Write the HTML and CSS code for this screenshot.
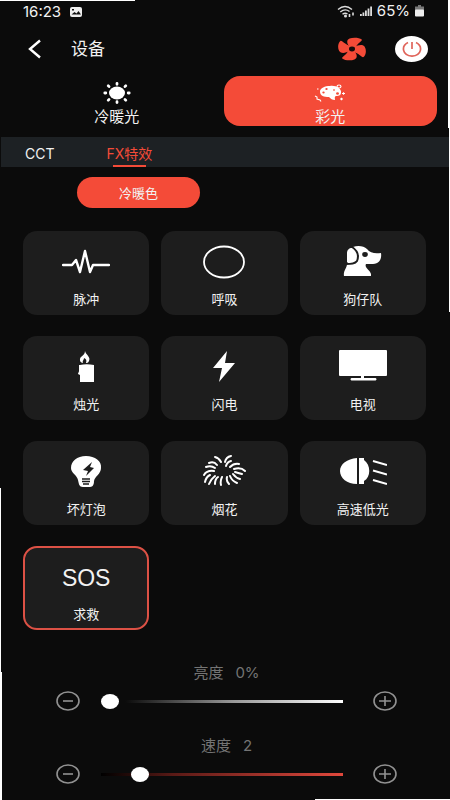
FILE: index.html
```html
<!DOCTYPE html>
<html lang="zh-CN">
<head>
<meta charset="utf-8">
<meta name="viewport" content="width=device-width, initial-scale=1">
<title>设备</title>
<link rel="stylesheet" href="styles.css">
</head>
<body>
<div class="status">
  <span class="status-group">16:23
    <svg width="14" height="12" viewBox="0 0 14 12"><rect x="1" y="1" width="12" height="10" rx="2" fill="#eee"/><path d="M2.500 8.500 5.500 6l2 1.500L9.500 5 12 8.500z" fill="#111"/><path d="M3 3h2v1.500H3z" fill="#111"/></svg>
  </span>
  <span class="status-group status-right">
    <svg width="18" height="13" viewBox="0 0 18 13" fill="none" stroke="#ddd" stroke-width="1.400"><path d="M1 4.500Q8 -1.500 15 4.500M3.300 7Q8 3 12.500 6.500M5.500 9.300Q8 7.300 10.500 9"/><circle cx="8.500" cy="11" r=".8" fill="#ddd"/><path d="M12.500 9v3M16 7.500v3" stroke-width="1.600"/></svg>
    <svg width="12" height="12" viewBox="0 0 12 12" fill="#ddd"><path d="M0 9h1.800v2H0zM2.500 7.500h1.800V11H2.500zM5 5.500h1.800V11H5zM7.600 3.500h1.800V11H7.600zM10.200 1.500H12V11h-1.800z"/></svg>
    65%
    <svg width="9" height="12" viewBox="0 0 9 12"><path d="M3 0h3v1.500h3V11H0V1.500h3z" fill="#777"/><rect y="4.500" width="9" height="7" rx="1" fill="#eee"/></svg>
  </span>
</div>

<header class="header">
  <button class="icon-button" aria-label="返回">
    <svg width="14" height="20" viewBox="0 0 14 20" fill="none" stroke="#fff" stroke-width="2.400"><path d="M12 1.500 2 10l10 8.500"/></svg>
  </button>
  <h1 class="title">设备</h1>
  <button class="icon-button fan" aria-label="风扇">
    <svg width="28" height="24" viewBox="-14 -12 28 24" fill="#f44b38">
      <defs><path id="blade" d="M-2-2C-4-5-5-9-2-10.500C1-12 6-11.500 8-9.500C9-8 4-6 3-1z"/></defs>
      <g transform="scale(1.220 1)"><use href="#blade"/><use href="#blade" transform="rotate(90)"/><use href="#blade" transform="rotate(180)"/><use href="#blade" transform="rotate(270)"/></g>
      <ellipse rx="3" ry="2.400" fill="#170d0c"/>
    </svg>
  </button>
  <button class="power" aria-label="电源">
    <svg width="20" height="18" viewBox="0 0 20 18" fill="none" stroke="#e0645a" stroke-width="1.700"><path d="M6 2.500C-1 6 0 15.500 10 16.200C20 15.500 21 6 14 2.500M10 2v7"/></svg>
  </button>
</header>

<nav class="modes">
  <button class="mode">
    <svg width="28" height="24" viewBox="0 0 28 24" fill="#fff"><ellipse cx="14" cy="12" rx="8" ry="6.500"/><path d="M14 2.500v.8M14 20.700v.8M1.800 12h1M25.200 12h1M5.200 4.800l.8.700M22 18.500l.8.700M22.800 4.800l-.8.700M6 18.500l-.8.700" stroke="#fff" stroke-width="2.800" stroke-linecap="round"/></svg>
    <span>冷暖光</span>
  </button>
  <button class="mode mode-active">
    <svg width="32" height="24" viewBox="0 0 32 24"><path d="M16 5C22 4 28 8 27 12c0 2-2 3-4 3-3 0-2 2-2 4-3 0-4-1-6-3-5 0-9-1-9-5.500C6 7 11 5 16 5z" fill="#fff"/><g fill="#f44b38"><ellipse cx="9.500" cy="11.500" rx="1.200" ry="1"/><ellipse cx="12.500" cy="8" rx="1.200" ry="1"/><ellipse cx="20" cy="9" rx="1" ry=".8"/><ellipse cx="23.500" cy="12.500" rx="1.400" ry="1.200"/></g><g stroke="#fff" stroke-width="1.100" fill="none"><ellipse cx="25" cy="5.500" rx="2" ry="1.500"/><path d="m1 15 2 1v2l3 1 1 1.500M28 12.500h3M29.500 11.200v2.600M26 18h3M27.500 16.700v2.600M3 8h1.500"/></g></svg>
    <span>彩光</span>
  </button>
</nav>

<nav class="tabs">
  <a class="tab" href="#cct">CCT</a>
  <a class="tab tab-active" href="#fx">FX特效</a>
</nav>

<main class="content">
  <button class="pill">冷暖色</button>

  <section class="effects">
    <button class="effect">
      <svg width="48" height="36" viewBox="0 0 48 36" fill="none" stroke="#fff" stroke-width="2.400" stroke-linecap="round" stroke-linejoin="round"><path d="M1 20h9l4-5 4 12 5-21 5 21 3-7h16"/></svg>
      <span>脉冲</span>
    </button>
    <button class="effect">
      <svg width="48" height="36" viewBox="0 0 48 36" fill="none" stroke="#fff" stroke-width="1.800"><ellipse cx="24" cy="17" rx="20" ry="15.500"/></svg>
      <span>呼吸</span>
    </button>
    <button class="effect">
      <svg width="48" height="36" viewBox="0 0 48 36"><path d="M14 2C19 0 25 1 28 4c3 4 8 5 14 4 1 6-2 11-8 11h-7c-2 4 4 6 5 10v2H5c-1-5 3-8 3-12z" fill="#fff"/><path d="M13 2c6 4 7 9 5 14-2 3-6 3-11 3" fill="none" stroke="#1d1d1d" stroke-width="2"/><path d="M8 17V8c0-3 2-5 5-5 3 4 4 8 3 12-2 2-5 2-8 2z" fill="#fff"/><ellipse cx="26" cy="9.500" rx="2.800" ry="2.400" fill="#1d1d1d"/></svg>
      <span>狗仔队</span>
    </button>
    <button class="effect">
      <svg width="48" height="36" viewBox="0 0 48 36" fill="#fff"><path d="M23 1c1 4 6 6 4 10-1 2-2 2-3 2 1-3 0-4-2-5 0 2-2 3-1 5-3 0-4-4-2-6 2-2 4-3 4-6z"/><path d="M17 15h1c4-1 9-1 14 0v17H18v-7l-2-1c0-1 1-2 1-3z"/></svg>
      <span>烛光</span>
    </button>
    <button class="effect">
      <svg width="48" height="36" viewBox="0 0 48 36" fill="#fff"><path d="M27 1 13 18h9l-3 14 16-19h-10z"/></svg>
      <span>闪电</span>
    </button>
    <button class="effect">
      <svg width="48" height="36" viewBox="0 0 48 36" fill="#fff"><rect y="0" width="48" height="26" rx="1"/><path d="M22 26h3v2h11c2 0 2 2.500 0 2.500H13c-2 0-2-2.500 0-2.500h9z"/></svg>
      <span>电视</span>
    </button>
    <button class="effect">
      <svg width="48" height="36" viewBox="0 0 48 36"><path d="M24 1C33 1 40 6 39 13c0 6-6 8-7 13 0 5-2 6-5 6h-6c-4 0-4-3-5-7-1-5-7-7-7-12C9 6 15 1 24 1z" fill="#fff"/><path d="m30 7-9 8 5 1-2 5 8-8-4-1z" fill="#1d1d1d"/><path d="M20 24h8M20 26.500h8M21 29h6" stroke="#1d1d1d" stroke-width="1.500"/></svg>
      <span>坏灯泡</span>
    </button>
    <button class="effect">
      <svg width="48" height="36" viewBox="0 0 48 36" fill="none" stroke="#fff" stroke-width="2" stroke-linecap="round"><path d="M15 2q4 1 6 5M31 1q-5 1-6 6M31 6q-4 1-5 5M9 8q5-2 8 2M6 12q5-2 9 1M39 9q-5-1-9 3M45 16q-4-4-11-2M4 20q3-5 10-4M5 27q1-5 5-7M9 29q2-5 6-8M15 29q0-5 3-7M21 30q-1-4 1-8M29 29q-3-3-2-7M37 28q-5-2-7-7M40 24q-4-1-7-5M42 19q-4-1-7-2"/></svg>
      <span>烟花</span>
    </button>
    <button class="effect">
      <svg width="48" height="36" viewBox="0 0 48 36"><path d="M18 3v26C8 29 1 23 1 16S8 4 18 3zM20 3h5v2c7 5 7 17 0 21v3h-5z" fill="#fff"/><path d="m34 6 14 4M34 15.500l14 4M34 25l14 4" stroke="#fff" stroke-width="2"/></svg>
      <span>高速低光</span>
    </button>
    <button class="effect effect-active">
      <strong class="sos">SOS</strong>
      <span>求救</span>
    </button>
  </section>

  <section class="control">
    <label class="control-label" for="brightness">亮度<span>0%</span></label>
    <div class="control-row">
      <button class="step" aria-label="降低亮度"><svg width="24" height="20" viewBox="0 0 24 20"><ellipse cx="12" cy="10" rx="11" ry="9"/><path d="M7 10h10"/></svg></button>
      <input class="range" id="brightness" type="range" min="0" max="100" value="0">
      <button class="step" aria-label="提高亮度"><svg width="24" height="20" viewBox="0 0 24 20"><ellipse cx="12" cy="10" rx="11" ry="9"/><path d="M6 10h12M12 5v10"/></svg></button>
    </div>
  </section>
  <section class="control">
    <label class="control-label" for="speed">速度<span>2</span></label>
    <div class="control-row">
      <button class="step" aria-label="降低速度"><svg width="24" height="20" viewBox="0 0 24 20"><ellipse cx="12" cy="10" rx="11" ry="9"/><path d="M7 10h10"/></svg></button>
      <input class="range range-red" id="speed" type="range" min="0" max="15" value="2">
      <button class="step" aria-label="提高速度"><svg width="24" height="20" viewBox="0 0 24 20"><ellipse cx="12" cy="10" rx="11" ry="9"/><path d="M6 10h12M12 5v10"/></svg></button>
    </div>
  </section>
</main>
</body>
</html>
```
FILE: styles.css
```css
* { box-sizing: border-box; }

body {
  margin: 0;
  min-height: 100vh;
  color: #f2f2f2;
  font-family: Inter, "Noto Sans CJK SC", sans-serif;
  /* light slivers along the edges of the dark surface */
  background:
    linear-gradient(#fff, #fff) left top / 30% 1px no-repeat,
    linear-gradient(#fff, #fff) right top / 2px 16% no-repeat,
    linear-gradient(#fff, #fff) right top / 1px 39% no-repeat,
    linear-gradient(#fff, #fff) left bottom / 1px 39% no-repeat,
    linear-gradient(#fff, #fff) left bottom / 2px 16% no-repeat,
    linear-gradient(#fff, #fff) right bottom / 30% 1px no-repeat,
    #0b0b0b;
}

button {
  padding: 0;
  border: 0;
  background: none;
  color: inherit;
  font: inherit;
}

svg { display: block; flex: none; }

.status {
  display: flex;
  justify-content: space-between;
  height: 24px;
  padding: 0 26px 0 23px;
  font-size: 15px;
  line-height: 24px;
}

.status-group { display: flex; align-items: center; gap: 8px; }
.status-right { gap: 5px; height: 22px; }

.header {
  display: flex;
  align-items: center;
  height: 52px;
  padding: 0 22px 2px 28px;
}

.title {
  flex: 1;
  margin: 0 0 0 29px;
  font-size: 17px;
  font-weight: 400;
  line-height: 24px;
}

.fan { margin-right: 29px; }

.power {
  display: grid;
  place-items: center;
  width: 33px;
  height: 26px;
  border-radius: 50%;
  background: #fff;
}

.modes {
  display: grid;
  grid-template-columns: 1fr 1fr;
  padding: 0 13px 0 10px;
}

.mode {
  display: flex;
  flex-direction: column;
  align-items: center;
  height: 50px;
  padding-top: 5px;
  border-radius: 16px;
  font-size: 15px;
  line-height: 24px;
}

.mode-active { background: #f44b38; }

.tabs {
  display: flex;
  gap: 52px;
  height: 30px;
  margin: 11px 1px 0;
  padding-left: 24px;
  background: #1d2124;
}

.tab {
  display: flex;
  flex-direction: column;
  align-items: center;
  padding-top: 6px;
  color: #f2f2f2;
  font-size: 14px;
  line-height: 22px;
  text-decoration: none;
}

.tab-active { color: #f44b38; }

.tab-active::after {
  content: "";
  flex: none;
  width: 33px;
  height: 2px;
  background: #f44b38;
}

.content { padding: 10px 24px 0 23px; }

.pill {
  display: block;
  width: 123px;
  height: 31px;
  margin-left: 54px;
  border-radius: 16px;
  background: #f44b38;
  font-size: 13px;
}

.effects {
  display: grid;
  grid-template-columns: repeat(3, 1fr);
  gap: 21px 12px;
  margin-top: 23px;
}

.effect {
  display: flex;
  flex-direction: column;
  align-items: center;
  gap: 6px;
  height: 84px;
  padding-top: 14px;
  border-radius: 14px;
  background: #1d1d1d;
  font-size: 13px;
  line-height: 24px;
}

.effect-active {
  padding-top: 12px;
  border: 2px solid #dc5145;
}

.sos {
  font-family: "Liberation Sans", sans-serif;
  font-size: 23px;
  font-weight: 400;
  line-height: 36px;
}

.control { margin: 31px 29px 0 33px; }
.control + .control { margin-top: 23px; }

.control-label {
  display: flex;
  justify-content: center;
  gap: 12px;
  color: #747474;
  font-size: 15px;
  line-height: 24px;
}

.control-row {
  display: flex;
  align-items: center;
  margin-top: 6px;
}

.step svg { fill: none; stroke: #929292; stroke-width: 1.6; }

.range {
  flex: 1;
  min-width: 0;
  height: 20px;
  margin: 0 30px 0 21px;
  appearance: none;
  background: linear-gradient(90deg, #0b0b0b 10%, #999 55%, #fff) center / 100% 3px no-repeat;
}

.range-red {
  background-image: linear-gradient(90deg, #000, #5a1a16 30%, #e0483c);
}

.range::-webkit-slider-thumb {
  appearance: none;
  width: 18px;
  height: 15px;
  border-radius: 50%;
  background: #fff;
}
```
